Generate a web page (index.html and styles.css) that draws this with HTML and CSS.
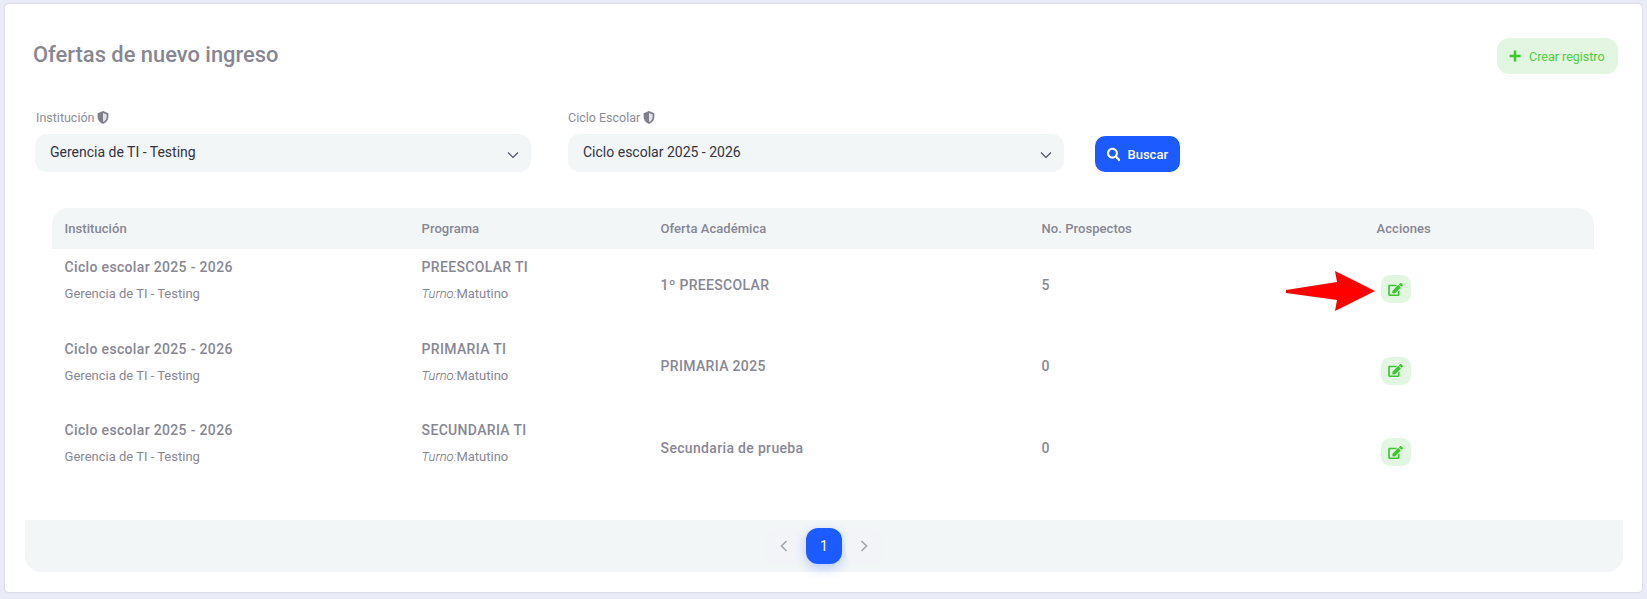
FILE: index.html
```html
<!DOCTYPE html>
<html lang="es">
<head>
<meta charset="utf-8">
<title>Ofertas de nuevo ingreso</title>
<link rel="stylesheet" href="styles.css">
</head>
<body>
<main class="card">
  <header class="head">
    <h1 class="title">Ofertas de nuevo ingreso</h1>
    <button class="btn-create">
      <svg class="ico-plus" viewBox="0 0 12 12"><path d="M6 0.500v11M0.500 6h11"/></svg>
      <span>Crear registro</span>
    </button>
  </header>
  <section class="filters">
    <div class="field">
      <label class="label">Institución <svg class="ico-shield" viewBox="0 0 12 14"><path class="s-out" d="M6 1 1 3v3.600c0 3 2.100 5.300 5 6.400 2.900-1.100 5-3.400 5-6.400V3z"/><path class="s-in" d="M6 2.800v8.500c2-.9 3.400-2.600 3.400-4.700V4.100z"/></svg></label>
      <div class="select"><span>Gerencia de TI - Testing</span><svg class="ico-caret" viewBox="0 0 12 8"><path d="M1 1.500l5 5 5-5"/></svg></div>
    </div>
    <div class="field">
      <label class="label">Ciclo Escolar <svg class="ico-shield" viewBox="0 0 12 14"><path class="s-out" d="M6 1 1 3v3.600c0 3 2.100 5.300 5 6.400 2.900-1.100 5-3.400 5-6.400V3z"/><path class="s-in" d="M6 2.800v8.500c2-.9 3.400-2.600 3.400-4.700V4.100z"/></svg></label>
      <div class="select"><span>Ciclo escolar 2025 - 2026</span><svg class="ico-caret" viewBox="0 0 12 8"><path d="M1 1.500l5 5 5-5"/></svg></div>
    </div>
    <button class="btn-search">
      <svg class="ico-search" viewBox="0 0 512 512"><path d="M505 442.700L405.300 343c-4.500-4.500-10.600-7-17-7H372c27.600-35.300 44-79.700 44-128C416 93.100 322.900 0 208 0S0 93.100 0 208s93.100 208 208 208c48.300 0 92.700-16.400 128-44v16.300c0 6.400 2.500 12.500 7 17l99.700 99.700c9.400 9.400 24.600 9.400 33.900 0l28.300-28.300c9.400-9.400 9.400-24.600.1-34zM208 336c-70.700 0-128-57.200-128-128 0-70.700 57.200-128 128-128 70.700 0 128 57.200 128 128 0 70.700-57.200 128-128 128z"/></svg>
      <span>Buscar</span>
    </button>
  </section>
  <table class="tbl">
    <thead>
      <tr><th class="c1">Institución</th><th class="c2">Programa</th><th class="c3">Oferta Académica</th><th class="c4">No. Prospectos</th><th class="c5">Acciones</th></tr>
    </thead>
    <tbody>
      <tr>
        <td><div class="main">Ciclo escolar 2025 - 2026</div><div class="sub">Gerencia de TI - Testing</div></td>
        <td><div class="main">PREESCOLAR TI</div><div class="sub"><em>Turno:</em>Matutino</div></td>
        <td class="strong">1º PREESCOLAR</td>
        <td class="strong">5</td>
        <td class="act"><button class="btn-edit"><svg class="ico-edit" viewBox="0 0 576 512"><path d="M402.600 83.200l90.200 90.200c3.800 3.800 3.800 10 0 13.800L274.400 405.600l-92.800 10.300c-12.400 1.400-22.900-9.100-21.500-21.500l10.300-92.800L388.800 83.200c3.800-3.800 10-3.800 13.800 0zm162-22.900l-48.800-48.800c-15.200-15.200-39.900-15.200-55.200 0l-35.400 35.400c-3.800 3.800-3.800 10 0 13.800l90.200 90.200c3.800 3.800 10 3.800 13.800 0l35.400-35.400c15.200-15.300 15.200-40 0-55.200zM384 346.200V448H64V128h229.800c3.200 0 6.200-1.300 8.500-3.500l40-40c7.600-7.600 2.200-20.500-8.500-20.500H48C21.500 64 0 85.500 0 112v352c0 26.500 21.500 48 48 48h352c26.500 0 48-21.500 48-48V306.200c0-10.700-12.900-16-20.500-8.500l-40 40c-2.200 2.300-3.500 5.300-3.500 8.500z"/></svg></button></td>
      </tr>
      <tr>
        <td><div class="main">Ciclo escolar 2025 - 2026</div><div class="sub">Gerencia de TI - Testing</div></td>
        <td><div class="main">PRIMARIA TI</div><div class="sub"><em>Turno:</em>Matutino</div></td>
        <td class="strong">PRIMARIA 2025</td>
        <td class="strong">0</td>
        <td class="act"><button class="btn-edit"><svg class="ico-edit" viewBox="0 0 576 512"><path d="M402.600 83.200l90.200 90.200c3.800 3.800 3.800 10 0 13.800L274.400 405.600l-92.800 10.300c-12.400 1.400-22.900-9.100-21.500-21.500l10.300-92.800L388.800 83.200c3.800-3.800 10-3.800 13.800 0zm162-22.900l-48.800-48.800c-15.200-15.200-39.900-15.200-55.200 0l-35.400 35.400c-3.800 3.800-3.800 10 0 13.800l90.200 90.200c3.800 3.800 10 3.800 13.800 0l35.400-35.400c15.200-15.300 15.200-40 0-55.200zM384 346.200V448H64V128h229.800c3.200 0 6.200-1.300 8.500-3.500l40-40c7.600-7.600 2.200-20.500-8.500-20.500H48C21.500 64 0 85.500 0 112v352c0 26.500 21.500 48 48 48h352c26.500 0 48-21.500 48-48V306.200c0-10.700-12.900-16-20.500-8.500l-40 40c-2.200 2.300-3.500 5.300-3.500 8.500z"/></svg></button></td>
      </tr>
      <tr>
        <td><div class="main">Ciclo escolar 2025 - 2026</div><div class="sub">Gerencia de TI - Testing</div></td>
        <td><div class="main">SECUNDARIA TI</div><div class="sub"><em>Turno:</em>Matutino</div></td>
        <td class="strong">Secundaria de prueba</td>
        <td class="strong">0</td>
        <td class="act"><button class="btn-edit"><svg class="ico-edit" viewBox="0 0 576 512"><path d="M402.600 83.200l90.200 90.200c3.800 3.800 3.800 10 0 13.800L274.400 405.600l-92.800 10.300c-12.400 1.400-22.900-9.100-21.500-21.500l10.300-92.800L388.800 83.200c3.800-3.800 10-3.800 13.800 0zm162-22.900l-48.800-48.800c-15.200-15.200-39.900-15.200-55.200 0l-35.400 35.400c-3.800 3.800-3.800 10 0 13.800l90.200 90.200c3.800 3.800 10 3.800 13.800 0l35.400-35.400c15.200-15.300 15.200-40 0-55.200zM384 346.200V448H64V128h229.800c3.200 0 6.200-1.300 8.500-3.500l40-40c7.600-7.600 2.200-20.500-8.500-20.500H48C21.500 64 0 85.500 0 112v352c0 26.500 21.500 48 48 48h352c26.500 0 48-21.500 48-48V306.200c0-10.700-12.900-16-20.500-8.500l-40 40c-2.200 2.300-3.500 5.300-3.500 8.500z"/></svg></button></td>
      </tr>
    </tbody>
  </table>
  <nav class="pager">
    <button class="pg-nav"><svg viewBox="0 0 8 12"><path d="M6.500 1 1.500 6l5 5"/></svg></button>
    <button class="pg-cur">1</button>
    <button class="pg-nav"><svg viewBox="0 0 8 12"><path d="M1.500 1l5 5-5 5"/></svg></button>
  </nav>
  <svg class="arrow" viewBox="0 0 89 40"><path d="M0 19 51 11 49 0 89 20 49 40 51 29 0 22z"/></svg>
</main>
</body>
</html>
```
FILE: styles.css
```css
* { box-sizing: border-box; }
html, body { margin: 0; height: 100%; }
body {
  background: #e9ebf6;
  padding: 4px 5px 7px;
  font-family: Roboto, "Liberation Sans", sans-serif;
  color: #878793;
  overflow: hidden;
}
button { font-family: inherit; border: 0; cursor: pointer; }

.card {
  position: relative;
  height: 588px;
  background: #fff;
  border-radius: 4px;
  box-shadow: 0 0 2px rgba(0,0,0,.2);
  padding: 34px 19px 0 20px;
}
.head {
  display: flex;
  justify-content: space-between;
  align-items: center;
  padding: 0 5px 0 8px;
  height: 36px;
}
.title { margin: 0 0 4px; font-size: 21.900px; font-weight: 500; color: #878793; }
.btn-create {
  display: flex;
  align-items: center;
  gap: 8px;
  width: 121px;
  height: 36px;
  padding: 0 12px;
  border-radius: 12px;
  background: #e3f6e1;
  color: #4dcf3f;
  font-size: 12.500px;
  white-space: nowrap;
}
.ico-plus { width: 12px; height: 12px; fill: none; stroke: #3cc731; stroke-width: 2.500; }

.filters {
  display: flex;
  align-items: flex-end;
  margin-top: 35px;
  padding-left: 10px;
}
.field { width: 496px; margin-right: 37px; }
.field + .field { margin-right: 31px; }
.label {
  display: flex;
  align-items: center;
  gap: 2px;
  height: 16px;
  margin: 0 0 9px 1px;
  font-size: 12.500px;
  color: #8c8c98;
}
.field + .field .label { margin-left: 0; }
.ico-shield { width: 14px; height: 15px; }
.s-out { fill: #7f7f8c; }
.s-in { fill: #e3e3ea; }
.select {
  display: flex;
  justify-content: space-between;
  align-items: center;
  height: 38px;
  padding: 0 12px 2px 15px;
  border-radius: 12px;
  background: #f3f6f7;
  font-size: 14px;
  color: #32333f;
}
.ico-caret { width: 12px; height: 8px; margin-top: 5px; fill: none; stroke: #4d5060; stroke-width: 1.150; }
.btn-search {
  display: flex;
  align-items: center;
  gap: 7px;
  width: 85px;
  height: 36px;
  padding: 0 12px;
  border-radius: 10px;
  background: #1c5bff;
  color: #fff;
  font-size: 13px;
  font-weight: 500;
}
.ico-search { width: 15px; height: 15px; fill: #fff; }

.tbl {
  width: 1542px;
  margin: 36px 0 0 27px;
  border-collapse: collapse;
  table-layout: fixed;
}
.tbl th {
  height: 41px;
  padding: 0 12px 0 12.600px;
  background: #f3f6f7;
  text-align: left;
  font-size: 13px;
  font-weight: 500;
  letter-spacing: .05px;
  color: #878793;
}
.tbl th:first-child { border-top-left-radius: 16px; }
.tbl th:last-child { border-top-right-radius: 16px; }
.c1 { width: 357px; }
.c2 { width: 239px; }
.c3 { width: 381px; }
.c4 { width: 335px; }
.tbl td { height: 81.500px; padding: 0 12px 18px 12.600px; vertical-align: middle; }
.main { font-size: 14px; font-weight: 500; letter-spacing: .33px; color: #878793; line-height: 20px; }
.sub { margin-top: 7px; font-size: 13px; color: #878793; line-height: 20px; }
.sub em { font-style: italic; font-weight: 300; color: #6f6f7c; }
.tbl td.strong { padding-bottom: 10px; font-size: 14px; font-weight: 500; letter-spacing: .33px; }
.tbl td.act { padding-bottom: 4px; }
.btn-edit {
  display: flex;
  align-items: center;
  justify-content: center;
  width: 30px;
  height: 28px;
  margin: 3px 0 0 4.400px;
  padding: 0;
  border-radius: 9px;
  background: #e3f6e1;
}
.ico-edit { width: 15px; height: 13px; fill: #3cc731; }

.pager {
  display: flex;
  justify-content: center;
  align-items: center;
  gap: 4px;
  width: 1598px;
  height: 52px;
  margin-top: 26px;
  background: #f3f6f7;
  border-radius: 0 0 16px 16px;
}
.pager button {
  display: flex;
  align-items: center;
  justify-content: center;
  width: 36px;
  height: 36px;
  padding: 0;
  border-radius: 12px;
}
.pg-nav { background: #f2f4f8; }
.pg-nav svg { width: 8px; height: 12px; fill: none; stroke: #a3a6b0; stroke-width: 1.600; }
.pg-cur {
  background: #1c5bff;
  color: #fff;
  font-size: 14px;
  box-shadow: 0 4px 12px rgba(28,91,255,.28);
}

.arrow {
  position: absolute;
  left: 1281px;
  top: 267px;
  width: 89px;
  height: 40px;
  fill: #ff0000;
}
```
